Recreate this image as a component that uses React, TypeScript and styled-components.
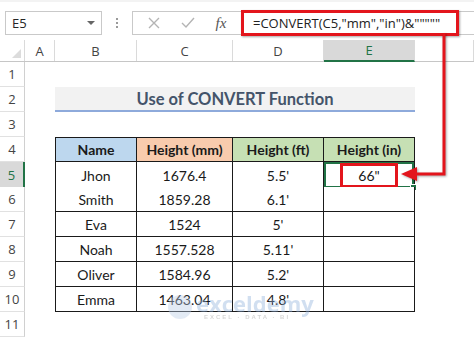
import React from "react";
import styled, { createGlobalStyle } from "styled-components";

const GlobalStyle = createGlobalStyle`
  html, body {
    margin: 0;
    padding: 0;
    background: #ffffff;
  }
  body {
    font-family: "Lato", "Liberation Sans", sans-serif;
  }
`;

// column widths: row head, A, B, C, D, E, F
const COLS = "25px 30px 82px 96px 91px 91px 59px";

const rows = [
  { name: "Jhon", mm: "1676.4", ft: "5.5'", inch: '66"' },
  { name: "Smith", mm: "1859.28", ft: "6.1'", inch: "" },
  { name: "Eva", mm: "1524", ft: "5'", inch: "" },
  { name: "Noah", mm: "1557.528", ft: "5.11'", inch: "" },
  { name: "Oliver", mm: "1584.96", ft: "5.2'", inch: "" },
  { name: "Emma", mm: "1463.04", ft: "4.8'", inch: "" },
];

const App = () => {
  return (
    <Page>
      <GlobalStyle />
      <TopBar>
        <NameBox>
          <span>E5</span>
          <Caret />
        </NameBox>
        <Dots>
          <i />
          <i />
          <i />
        </Dots>
        <FormulaBox>
          <FxButtons>
            <svg width="12" height="12" viewBox="0 0 12 12">
              <path d="M1 1 L11 11 M11 1 L1 11" stroke="#b4b4b4" strokeWidth="1.4" fill="none" />
            </svg>
            <svg width="14" height="12" viewBox="0 0 14 12">
              <path d="M1 6 L5 10 L13 1" stroke="#b4b4b4" strokeWidth="1.4" fill="none" />
            </svg>
            <FxLabel>fx</FxLabel>
          </FxButtons>
          <FormulaText>=CONVERT(C5,"mm","in")&amp;"""""</FormulaText>
        </FormulaBox>
        <FormulaMark />
      </TopBar>

      <ColHeadRow>
        <Corner />
        <ColHead>A</ColHead>
        <ColHead>B</ColHead>
        <ColHead>C</ColHead>
        <ColHead>D</ColHead>
        <ColHead $active>E</ColHead>
        <ColHead />
      </ColHeadRow>

      <SheetRow>
        <RowNum>1</RowNum>
      </SheetRow>

      <SheetRow>
        <RowNum>2</RowNum>
        <Blank />
        <TitleCell>Use of CONVERT Function</TitleCell>
      </SheetRow>

      <SheetRow>
        <RowNum>3</RowNum>
      </SheetRow>

      <SheetRow>
        <RowNum>4</RowNum>
        <Blank />
        <Cell $bg="#bdd7ee" $first $top $bold>Name</Cell>
        <Cell $bg="#f8cbad" $top $bold>Height (mm)</Cell>
        <Cell $bg="#c6e0b4" $top $bold>Height (ft)</Cell>
        <Cell $bg="#c6e0b4" $top $bold>Height (in)</Cell>
      </SheetRow>

      {rows.map((r, idx) => (
        <SheetRow key={r.name}>
          <RowNum $active={idx === 0}>{idx + 5}</RowNum>
          <Blank />
          <Cell $first>{r.name}</Cell>
          <Cell>{r.mm}</Cell>
          <Cell>{r.ft}</Cell>
          <Cell $selected={idx === 0}>
            {r.inch && <RedMark>{r.inch}</RedMark>}
          </Cell>
        </SheetRow>
      ))}

      <SheetRow>
        <RowNum>11</RowNum>
      </SheetRow>

      <Arrow width="474" height="337" viewBox="0 0 474 337">
        <path d="M444 33 V174 H414" stroke="#e3151c" strokeWidth="3" fill="none" />
        <polygon points="401,174 417,167 417,181" fill="#e3151c" />
      </Arrow>

      <Watermark>
        <LogoDot />
        <div>
          <MarkText>exceldemy</MarkText>
          <MarkTag>EXCEL · DATA · BI</MarkTag>
        </div>
      </Watermark>
    </Page>
  );
};

const Page = styled.div`
  position: relative;
  width: 474px;
  height: 337px;
  overflow: hidden;
  background: #ffffff;
`;

const TopBar = styled.div`
  position: relative;
  height: 40px;
  box-sizing: border-box;
  padding: 9px 0 0 5px;
  display: flex;
  align-items: flex-start;
  background: #ffffff;
  border-top: 2px solid #f3f3f3;
`;

const NameBox = styled.div`
  width: 97px;
  height: 24px;
  box-sizing: border-box;
  border: 1px solid #c9c9c9;
  display: flex;
  align-items: center;
  justify-content: space-between;
  padding: 0 6px 0 6px;
  font-family: "Open Sans", "Liberation Sans", sans-serif;
  font-size: 13px;
  color: #262626;
`;

const Caret = styled.span`
  width: 0;
  height: 0;
  border-left: 4px solid transparent;
  border-right: 4px solid transparent;
  border-top: 4px solid #666;
`;

const Dots = styled.div`
  width: 30px;
  height: 24px;
  display: flex;
  flex-direction: column;
  align-items: center;
  justify-content: center;
  gap: 2px;

  i {
    width: 2px;
    height: 2px;
    background: #9a9a9a;
  }
`;

const FormulaBox = styled.div`
  flex: 1;
  height: 24px;
  box-sizing: border-box;
  border: 1px solid #c9c9c9;
  border-right: none;
  display: flex;
  align-items: center;
`;

const FxButtons = styled.div`
  width: 104px;
  display: flex;
  align-items: center;
  justify-content: space-around;
  padding-left: 4px;
  box-sizing: border-box;
`;

const FxLabel = styled.span`
  font-family: "Liberation Serif", serif;
  font-style: italic;
  font-size: 15px;
  color: #555;
`;

const FormulaText = styled.div`
  padding-left: 16px;
  font-family: "Open Sans", "Liberation Sans", sans-serif;
  font-size: 13px;
  color: #222;
  white-space: nowrap;
`;

const FormulaMark = styled.div`
  position: absolute;
  left: 241px;
  top: 8px;
  width: 218px;
  height: 26px;
  box-sizing: border-box;
  border: 3px solid #e3151c;
  box-shadow: 1px 1px 2px rgba(0, 0, 0, 0.35);
`;

const ColHeadRow = styled.div`
  display: grid;
  grid-template-columns: ${COLS};
  height: 22px;
  box-sizing: border-box;
  border-bottom: 1px solid #c6c6c6;
`;

const Corner = styled.div`
  position: relative;
  border-right: 1px solid #dadada;

  &::after {
    content: "";
    position: absolute;
    right: 3px;
    bottom: 3px;
    border-left: 9px solid transparent;
    border-bottom: 9px solid #dcdcdc;
  }
`;

const ColHead = styled.div<{ $active?: boolean }>`
  display: flex;
  align-items: center;
  justify-content: center;
  box-sizing: border-box;
  border-right: 1px solid #dadada;
  font-family: "Open Sans", "Liberation Sans", sans-serif;
  font-size: 13px;
  color: ${(p) => (p.$active ? "#217346" : "#444")};
  background: ${(p) => (p.$active ? "#d9d9d9" : "transparent")};
  border-bottom: ${(p) => (p.$active ? "2px solid #217346" : "none")};
  margin-bottom: ${(p) => (p.$active ? "-1px" : "0")};
`;

const SheetRow = styled.div`
  display: grid;
  grid-template-columns: ${COLS};
  height: 25px;
`;

const RowNum = styled.div<{ $active?: boolean }>`
  display: flex;
  align-items: center;
  justify-content: center;
  box-sizing: border-box;
  border-bottom: 1px solid #e1e1e1;
  border-right: ${(p) => (p.$active ? "2px solid #217346" : "1px solid #d0d0d0")};
  background: ${(p) => (p.$active ? "#d9d9d9" : "#ffffff")};
  font-family: "Open Sans", "Liberation Sans", sans-serif;
  font-size: 13px;
  color: ${(p) => (p.$active ? "#217346" : "#444")};
`;

const Blank = styled.div``;

const TitleCell = styled.div`
  grid-column: 3 / 7;
  display: flex;
  align-items: center;
  justify-content: center;
  box-sizing: border-box;
  background: #f2f2f2;
  border-bottom: 2px solid #8eaadb;
  font-weight: 700;
  font-size: 16.5px;
  color: #44546a;
`;

const Cell = styled.div<{
  $bg?: string;
  $first?: boolean;
  $top?: boolean;
  $bold?: boolean;
  $selected?: boolean;
}>`
  position: relative;
  display: flex;
  align-items: center;
  justify-content: center;
  box-sizing: border-box;
  background: ${(p) => p.$bg || "#ffffff"};
  border-right: 1px solid #1a1a1a;
  border-bottom: 1px solid #1a1a1a;
  border-left: ${(p) => (p.$first ? "1px solid #1a1a1a" : "none")};
  border-top: ${(p) => (p.$top ? "1px solid #1a1a1a" : "none")};
  font-size: 14px;
  font-weight: ${(p) => (p.$bold ? 700 : 400)};
  color: #1a1a1a;
  white-space: nowrap;
  box-shadow: ${(p) => (p.$selected ? "inset 0 0 0 2px #217346" : "none")};

  &::after {
    content: "";
    display: ${(p) => (p.$selected ? "block" : "none")};
    position: absolute;
    right: -3px;
    bottom: -3px;
    width: 5px;
    height: 5px;
    background: #217346;
    border: 1px solid #fff;
  }
`;

const RedMark = styled.span`
  width: 58px;
  height: 25px;
  margin-top: 1px;
  box-sizing: border-box;
  border: 3px solid #e3151c;
  display: flex;
  align-items: center;
  justify-content: center;
  background: #fff;
`;

const Arrow = styled.svg`
  position: absolute;
  left: 0;
  top: 0;
  pointer-events: none;
  filter: drop-shadow(1px 1px 1px rgba(0, 0, 0, 0.35));
`;

const Watermark = styled.div`
  position: absolute;
  left: 168px;
  top: 292px;
  display: flex;
  align-items: flex-start;
  gap: 4px;
  opacity: 0.4;
  pointer-events: none;
`;

const LogoDot = styled.div`
  width: 24px;
  height: 24px;
  margin-top: 3px;
  border-radius: 50%;
  background: #b9cbe6;
`;

const MarkText = styled.div`
  font-family: "Open Sans", "Liberation Sans", sans-serif;
  font-weight: 700;
  font-size: 22px;
  line-height: 22px;
  color: #8fb0dc;
`;

const MarkTag = styled.div`
  font-family: "Liberation Sans", sans-serif;
  font-weight: 700;
  font-size: 6px;
  line-height: 7px;
  letter-spacing: 2px;
  color: #9a9a9a;
  padding-left: 8px;
`;

export default App;
